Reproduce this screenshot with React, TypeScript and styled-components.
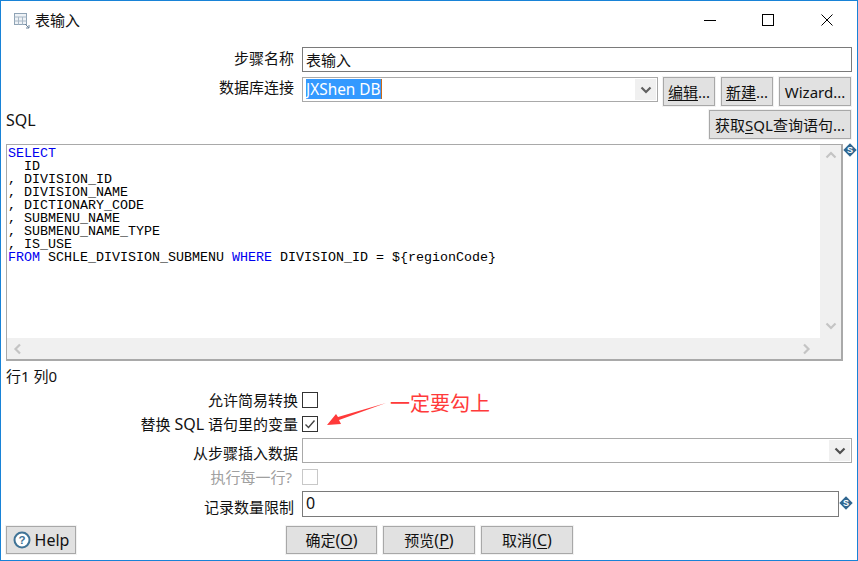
import React from "react";
import styled, { createGlobalStyle } from "styled-components";

const Global = createGlobalStyle`
  html, body { margin: 0; padding: 0; background: #fff; }
  * { box-sizing: border-box; }
`;

const Win = styled.div`
  width: 858px;
  height: 561px;
  border: 1px solid #1883d7;
  background: #fff;
  color: #111;
  font: 15px/20px "Noto Sans", "Noto Sans CJK SC", sans-serif;
  display: flex;
  flex-direction: column;
  overflow: hidden;
  position: relative;
`;

const TitleBar = styled.div`
  height: 46px;
  display: flex;
  align-items: flex-start;
  padding: 9px 1px 0 13px;
`;

const TitleIcon = styled.svg`
  width: 16px;
  height: 16px;
  margin-top: 3px;
  flex: none;
`;

const TitleText = styled.div`
  margin-left: 5px;
  flex: 1;
`;

const Ctrl = styled.div`
  width: 58.5px;
  height: 16px;
  display: flex;
  justify-content: center;
  align-items: center;
  margin-top: 2px;
`;

const Row = styled.div<{ $mt?: number; $h: number }>`
  display: grid;
  grid-template-columns: 301px 1fr;
  height: ${(p) => p.$h}px;
  margin-top: ${(p) => p.$mt ?? 0}px;
  padding-right: 5px;
`;

const Label = styled.div<{ $end?: number; $top?: number; $muted?: boolean }>`
  text-align: right;
  white-space: pre;
  padding-right: ${(p) => p.$end ?? 8}px;
  padding-top: ${(p) => p.$top ?? 0}px;
  color: ${(p) => (p.$muted ? "#a0a0a0" : "#111")};
`;

const Latin = styled.span<{ $size?: number }>`
  font-size: ${(p) => p.$size ?? 16}px;
`;

const Input = styled.div<{ $dark?: boolean; $w?: number; $h?: number; $lh?: number }>`
  height: ${(p) => p.$h ?? 25}px;
  width: ${(p) => (p.$w ? `${p.$w}px` : "auto")};
  flex: ${(p) => (p.$w ? "none" : "1")};
  border: 1px solid ${(p) => (p.$dark ? "#7a7a7a" : "#a9a9a9")};
  padding: 2px 3px;
  background: #fff;
  line-height: ${(p) => p.$lh ?? 20}px;
`;

const Combo = styled(Input)`
  display: flex;
  padding: 1px 1px 1px 3px;
  justify-content: space-between;
`;

const Selected = styled.span`
  background: #3399ff;
  color: #fff;
  height: 20px;
  line-height: 21px;
  font-size: 15.4px;
  border-right: 1px solid #c86a1a;
`;

const Drop = styled.div`
  width: 21px;
  background: #f0f0f0;
  display: flex;
  align-items: center;
  justify-content: center;
`;

const Controls = styled.div<{ $pt?: number }>`
  display: flex;
  align-items: flex-start;
  padding-top: ${(p) => p.$pt ?? 0}px;
`;

const Buttons = styled.div`
  display: flex;
  margin: 0 1px 0 5px;
  gap: 6px;
`;

const Btn = styled.div<{ $w: number; $h?: number }>`
  width: ${(p) => p.$w}px;
  height: ${(p) => p.$h ?? 29}px;
  background: #e1e1e1;
  border: 1px solid #a8a8a8;
  box-shadow: 0 0 0 1px #f2f2f2;
  display: flex;
  align-items: center;
  justify-content: center;
  white-space: pre;
  flex: none;
`;

const Key = styled.span`
  text-decoration: underline;
  text-underline-offset: 2px;
  text-decoration-thickness: 1px;
`;

const SqlRow = styled.div`
  display: flex;
  justify-content: space-between;
  height: 29px;
  margin-top: 4px;
  padding: 0 6px 0 5px;
`;

const EditorRow = styled.div`
  display: flex;
  margin-top: 5px;
  padding-left: 5px;
  height: 217px;
`;

const Editor = styled.div`
  width: 838px;
  border: 1px solid #a9a9a9;
  border-right-width: 2px;
  border-bottom-width: 2px;
  display: grid;
  grid-template-columns: 1fr 21px;
  grid-template-rows: 1fr 21px;
`;

const Code = styled.pre`
  margin: 0;
  padding: 2px 0 0 1px;
  font: 13.33px/13px "Liberation Mono", monospace;
  color: #000;
`;

const Kw = styled.span`
  color: #0000f0;
`;

const VBar = styled.div`
  background: #f0f0f0;
  display: flex;
  flex-direction: column;
  justify-content: space-between;
  align-items: center;
  padding: 4px 0 6px;
`;

const HBar = styled.div`
  background: #f0f0f0;
  grid-column: 1 / span 2;
  display: flex;
  justify-content: space-between;
  align-items: center;
  padding: 0 29px 0 5px;
`;

const Status = styled.div`
  margin-top: 3px;
  height: 24px;
  padding: 0 0 0 5px;
  display: flex;
  align-items: center;
`;

const Box = styled.div<{ $off?: boolean }>`
  width: 16px;
  height: 16px;
  border: 1px solid ${(p) => (p.$off ? "#c8c8c8" : "#333")};
  display: flex;
  align-items: center;
  justify-content: center;
`;

const Note = styled.div`
  position: absolute;
  left: 389px;
  top: 389px;
  font-size: 20px;
  line-height: 28px;
  color: #ff3a3a;
`;

const Arrow = styled.svg`
  position: absolute;
  left: 320px;
  top: 395px;
  width: 70px;
  height: 36px;
`;

const Footer = styled.div`
  display: flex;
  align-items: flex-start;
  height: 30px;
  margin-top: 9px;
  padding-left: 5px;
`;

const MainBtns = styled.div`
  display: flex;
  gap: 6px;
  margin-left: 210px;
`;

const HelpText = styled(Latin)`
  margin-left: 4px;
`;

const Chev = ({ d, c = "#c4c4c4", w = 12, h = 12 }: { d: string; c?: string; w?: number; h?: number }) => (
  <svg width={w} height={h} viewBox="0 0 12 12">
    <path d={d} fill="none" stroke={c} strokeWidth={2.2} />
  </svg>
);

const Dollar = ({ mt }: { mt: number }) => (
  <svg width={14} height={14} viewBox="0 0 14 14" style={{ marginTop: mt, flex: "none" }}>
    <path d="M7 0.3 13.7 7 7 13.7 0.3 7Z" fill="#2f6690" />
    <text x="7" y="10" fontSize="9" fontWeight="700" textAnchor="middle" fill="#fff" fontFamily="Liberation Sans">S</text>
  </svg>
);

const DOWN = "M1.5 3.5 6 8 10.5 3.5";

export default function App() {
  return (
    <Win>
      <Global />
      <TitleBar>
        <TitleIcon viewBox="0 0 16 16">
          <rect x="0.5" y="0.5" width="12" height="11" fill="#eef2f6" stroke="#8fa3b5" />
          <path d="M0.5 4H12.5M4.5 4V11.5M8.5 4V11.5M0.5 8H12.5" stroke="#a9b8c6" fill="none" />
          <path d="M11 11 15 15M15 12V15H12" stroke="#6b8299" fill="none" />
        </TitleIcon>
        <TitleText>表输入</TitleText>
        <Ctrl>
          <svg width="12" height="12" viewBox="0 0 12 12"><path d="M0 6.5H12" stroke="#000" /></svg>
        </Ctrl>
        <Ctrl>
          <svg width="12" height="12" viewBox="0 0 12 12"><rect x="0.5" y="0.5" width="11" height="11" fill="none" stroke="#000" /></svg>
        </Ctrl>
        <Ctrl>
          <svg width="12" height="12" viewBox="0 0 12 12"><path d="M0.5 0.5 11.5 11.5M11.5 0.5 0.5 11.5" stroke="#000" /></svg>
        </Ctrl>
      </TitleBar>

      <Row $h={25}>
        <Label $top={1}>步骤名称</Label>
        <Input $dark>表输入</Input>
      </Row>

      <Row $h={29} $mt={5}>
        <Label>数据库连接</Label>
        <Controls>
          <Combo>
            <Selected>JXShen DB</Selected>
            <Drop><Chev d={DOWN} c="#606060" /></Drop>
          </Combo>
          <Buttons>
            <Btn $w={52}><Key>编辑</Key>...</Btn>
            <Btn $w={52}><Key>新建</Key>...</Btn>
            <Btn $w={72}>Wizard...</Btn>
          </Buttons>
        </Controls>
      </Row>

      <SqlRow>
        <Latin>SQL</Latin>
        <Btn $w={142}>获取<Key>S</Key>QL查询语句...</Btn>
      </SqlRow>

      <EditorRow>
        <Editor>
          <Code>
            <Kw>SELECT</Kw>{"\n"}
            {"  ID\n, DIVISION_ID\n, DIVISION_NAME\n, DICTIONARY_CODE\n, SUBMENU_NAME\n, SUBMENU_NAME_TYPE\n, IS_USE\n"}
            <Kw>FROM</Kw>{" SCHLE_DIVISION_SUBMENU "}<Kw>WHERE</Kw>{" DIVISION_ID = ${regionCode}"}
          </Code>
          <VBar>
            <Chev d="M1.5 8.5 6 4 10.5 8.5" />
            <Chev d={DOWN} />
          </VBar>
          <HBar>
            <Chev d="M8 1.5 3.5 6 8 10.5" />
            <Chev d="M4 1.5 8.5 6 4 10.5" />
          </HBar>
        </Editor>
        <Dollar mt={-1} />
      </EditorRow>

      <Status>行1 列0</Status>

      <Row $h={24} $mt={2}>
        <Label $end={4}>允许简易转换</Label>
        <Controls $pt={2}><Box /></Controls>
      </Row>
      <Row $h={24}>
        <Label $end={4}>替换 <Latin>SQL</Latin> 语句里的变量</Label>
        <Controls $pt={2}>
          <Box>
            <svg width="14" height="14" viewBox="0 0 14 14"><path d="M2.5 7.5 5.5 10.5 11.5 3.5" fill="none" stroke="#444" strokeWidth="1.4" /></svg>
          </Box>
        </Controls>
      </Row>
      <Row $h={25}>
        <Label $end={4} $top={5}>从步骤插入数据</Label>
        <Combo>
          <span />
          <Drop><Chev d={DOWN} c="#505050" /></Drop>
        </Combo>
      </Row>
      <Row $h={22} $mt={4}>
        <Label $end={10} $muted>执行每一行?</Label>
        <Controls $pt={2}><Box $off /></Controls>
      </Row>
      <Row $h={26} $mt={2}>
        <Label $top={6}>记录数量限制</Label>
        <Controls>
          <Input $dark $w={537} $h={26} $lh={19}><Latin>0</Latin></Input>
          <Dollar mt={5} />
        </Controls>
      </Row>

      <Footer>
        <Btn $w={70} $h={28}>
          <svg width="18" height="18" viewBox="0 0 18 18">
            <circle cx="9" cy="9" r="7.5" fill="#fff" stroke="#3f7396" strokeWidth="2" />
            <text x="9" y="13" fontSize="11.5" fontWeight="700" textAnchor="middle" fill="#3f7396" fontFamily="Liberation Sans">?</text>
          </svg>
          <HelpText>Help</HelpText>
        </Btn>
        <MainBtns>
          <Btn $w={91} $h={28}>确定<Latin>(<Key>O</Key>)</Latin></Btn>
          <Btn $w={92} $h={28}>预览<Latin>(<Key>P</Key>)</Latin></Btn>
          <Btn $w={92} $h={28}>取消<Latin>(<Key>C</Key>)</Latin></Btn>
        </MainBtns>
      </Footer>

      <Arrow viewBox="0 0 70 36">
        <path d="M65 7 18 24 L20 28 L6 29 L15 18 L17 21 Z" fill="#ff3a3a" />
      </Arrow>
      <Note>一定要勾上</Note>
    </Win>
  );
}
